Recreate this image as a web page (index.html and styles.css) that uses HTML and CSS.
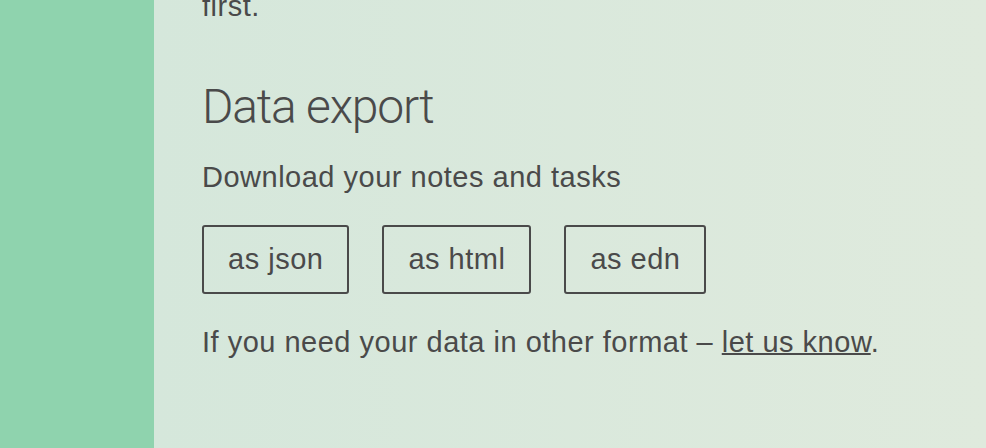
FILE: index.html
```html
<!DOCTYPE html>
<html lang="en">

<head>
    <meta charset="UTF-8">
    <meta name="viewport" content="width=device-width, initial-scale=1.0">
    <title>Settings - Data export</title>
    <link rel="stylesheet" href="styles.css">
</head>

<body>
    <div class="layout">
        <aside class="sidebar"></aside>

        <main class="content">
            <p class="prev">first.</p>

            <h2>Data export</h2>
            <p class="lead">Download your notes and tasks</p>

            <div class="export-buttons">
                <button type="button">as json</button>
                <button type="button">as html</button>
                <button type="button">as edn</button>
            </div>

            <p class="note">If you need your data in other format &ndash; <a href="#">let us know</a>.</p>
        </main>
    </div>
</body>

</html>
```
FILE: styles.css
```css
html,
body {
    margin: 0;
    height: 100%;
    overflow: hidden;
}

body {
    font-family: "Helvetica Neue", "Liberation Sans", Arial, sans-serif;
    font-size: 29px;
    letter-spacing: 0.5px;
    line-height: 40px;
    color: #4a4a4a;
}

.layout {
    display: flex;
    height: 100%;
}

.sidebar {
    width: 154px;
    flex-shrink: 0;
    background-color: #8fd3ae;
}

.content {
    flex: 1;
    padding: 0 48px;
    background: linear-gradient(to right, #d5e7db, #dfeadd);
}

.prev {
    margin: -14px 0 0;
}

h2 {
    margin: 51px 0 0;
    font-family: Roboto, "Liberation Sans", sans-serif;
    font-weight: 300;
    font-size: 48px;
    line-height: 60px;
    letter-spacing: -1.2px;
}

.lead {
    margin: 20px 0 0;
}

.export-buttons {
    display: flex;
    gap: 33px;
    margin-top: 28px;
}

.export-buttons button {
    font: inherit;
    letter-spacing: inherit;
    color: inherit;
    background: transparent;
    border: 2px solid #4a4a4a;
    border-radius: 3px;
    padding: 12px 24px 13px;
    cursor: pointer;
}

.note {
    margin: 28px 0 0;
}

.note a {
    color: inherit;
    text-decoration-thickness: 2px;
}
```
